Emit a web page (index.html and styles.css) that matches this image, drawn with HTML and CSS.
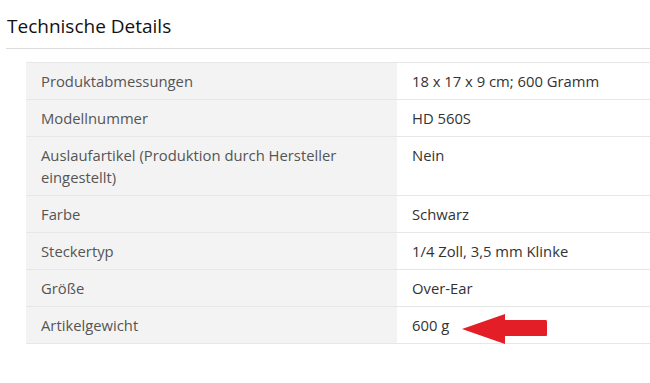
FILE: index.html
```html
<!DOCTYPE html>
<html lang="de">
<head>
    <meta charset="UTF-8">
    <meta name="viewport" content="width=device-width, initial-scale=1.0">
    <title>Technische Details</title>
    <link rel="stylesheet" href="styles.css">
</head>
<body>

    <!-- Section heading -->
    <div class="section">
        <h2 class="section-title">Technische Details</h2>

        <!-- Spec table -->
        <table class="spec-table">
            <tr>
                <th>Produktabmessungen</th>
                <td>18 x 17 x 9 cm; 600 Gramm</td>
            </tr>
            <tr>
                <th>Modellnummer</th>
                <td>HD 560S</td>
            </tr>
            <tr>
                <th>Auslaufartikel (Produktion durch Hersteller eingestellt)</th>
                <td>Nein</td>
            </tr>
            <tr>
                <th>Farbe</th>
                <td>Schwarz</td>
            </tr>
            <tr>
                <th>Steckertyp</th>
                <td>1/4 Zoll, 3,5 mm Klinke</td>
            </tr>
            <tr>
                <th>Größe</th>
                <td>Over-Ear</td>
            </tr>
            <tr>
                <th>Artikelgewicht</th>
                <td class="marked">
                    600 g
                    <svg class="arrow" width="86" height="30" viewBox="0 0 86 30">
                        <path d="M0 15 L43 0 L43 6 L84 6 Q85 6 85 8 L85 21 Q85 22 84 22 L43 22 L43 30 Z" fill="#e41e26"/>
                    </svg>
                </td>
            </tr>
        </table>
    </div>

</body>
</html>
```

FILE: styles.css
```css
body {
    margin: 0;
    background: white;
    font-family: "Open Sans", Arial, sans-serif;
    color: #333;
}
.section {
    padding: 13px 0 0 6px;
}
.section-title {
    margin: 0;
    padding: 0 0 9px 1px;
    font-size: 19px;
    font-weight: 400;
    line-height: 26px;
    color: #111;
    border-bottom: 1px solid #ddd;
}
.spec-table {
    margin: 13px 0 0 20px;
    width: calc(100% - 20px);
    border-collapse: collapse;
    font-size: 14.8px;
    line-height: 22px;
    border-top: 1px solid #e7e7e7;
}
.spec-table tr {
    border-bottom: 1px solid #e7e7e7;
}
.spec-table th {
    width: 341px;
    padding: 7px 15px;
    background: #f3f3f3;
    font-weight: 400;
    text-align: left;
    vertical-align: top;
    color: #555;
}
.spec-table td {
    padding: 7px 15px;
    vertical-align: top;
    color: #333;
}
.marked {
    position: relative;
}
.arrow {
    position: absolute;
    left: 65px;
    top: 7px;
}
```
